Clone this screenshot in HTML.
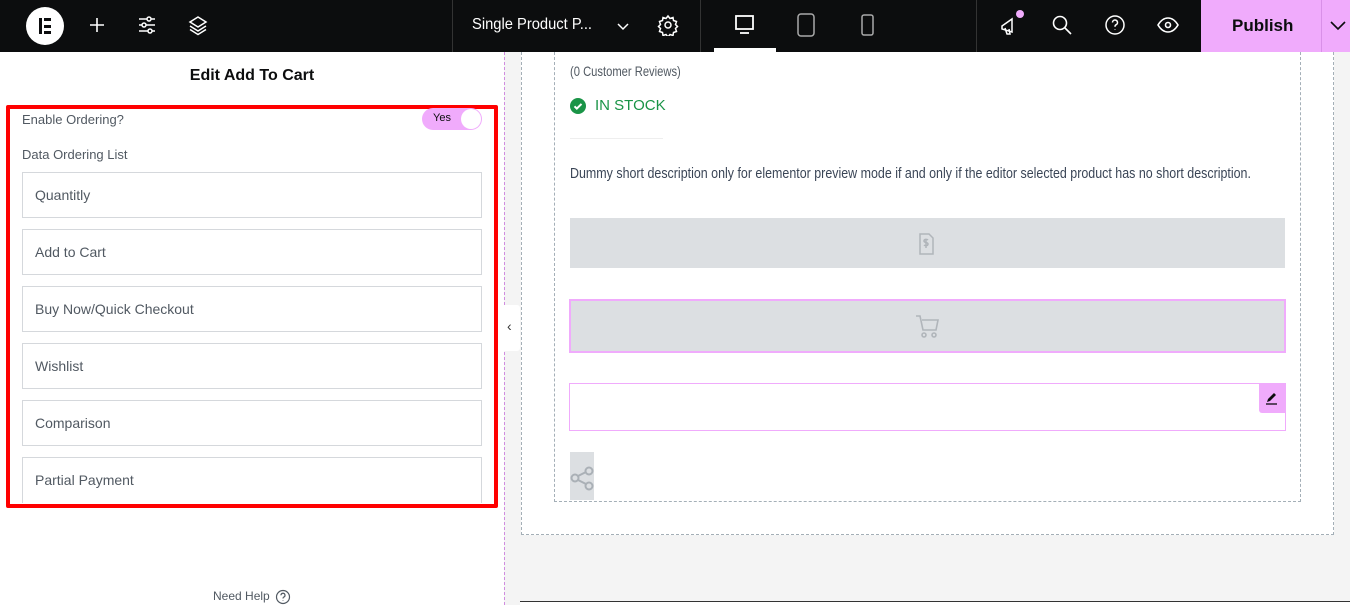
<!DOCTYPE html>
<html><head><meta charset="utf-8"><style>
*{box-sizing:border-box;margin:0;padding:0}
body{width:1350px;height:605px;overflow:hidden;background:#f4f4f4;font-family:"Liberation Sans",sans-serif;position:relative}
.top{position:absolute;left:0;top:0;width:1350px;height:52px;background:#0c0d0e;color:#fff;z-index:5}
.abs{position:absolute}
.panel{position:absolute;left:0;top:52px;width:504px;height:553px;background:#fff}
.item{position:absolute;left:22px;width:460px;height:46px;border:1px solid #d5d8dc;font-size:14px;color:#515962;padding:14px 0 0 12px}
.cond{white-space:nowrap;transform-origin:0 0}
</style></head><body>
<div class="top">
  <div class="abs" style="left:26px;top:7px;width:38px;height:38px;border-radius:50%;background:#fff"></div>
  <div class="abs" style="left:39px;top:18px;width:3px;height:16px;background:#0c0d0e"></div>
  <div class="abs" style="left:44px;top:18px;width:7px;height:3px;background:#0c0d0e"></div>
  <div class="abs" style="left:44px;top:24.5px;width:7px;height:3px;background:#0c0d0e"></div>
  <div class="abs" style="left:44px;top:31px;width:7px;height:3px;background:#0c0d0e"></div>
  <svg class="abs" style="left:86px;top:14px" width="22" height="22" stroke="#fff" stroke-width="1.6" fill="none"><path d="M11 4v14M4 11h14"/></svg>
  <svg class="abs" style="left:136px;top:14px" width="22" height="22" stroke="#fff" stroke-width="1.5" fill="none"><path d="M3 5h16M3 11h16M3 17h16"/><circle cx="13" cy="5" r="2" fill="#0c0d0e"/><circle cx="8" cy="11" r="2" fill="#0c0d0e"/><circle cx="14" cy="17" r="2" fill="#0c0d0e"/></svg>
  <svg class="abs" style="left:187px;top:14px" width="22" height="22" stroke="#fff" stroke-width="1.5" fill="none"><path d="M11 3l8 5-8 5-8-5z M3 12l8 5 8-5 M3 15.5l8 5 8-5"/></svg>
  <div class="abs" style="left:452px;top:0;width:1px;height:52px;background:#333"></div>
  <div class="abs cond" style="left:472px;top:16px;font-size:16px;color:#fff;transform:scaleX(0.92)">Single Product P...</div>
  <svg class="abs" style="left:615px;top:18px" width="16" height="16" stroke="#fff" stroke-width="1.5" fill="none"><path d="M3 6l5 5 5-5"/></svg>
  <svg class="abs" style="left:657px;top:14px" width="22" height="22" stroke="#fff" stroke-width="1.5" fill="none"><circle cx="11" cy="11" r="3"/><path d="M11 2l2 2.5 3-1 .5 3 3 1-1 3 2 2-2 2 1 3-3 1-.5 3-3-1-2 2.5-2-2.5-3 1-.5-3-3-1 1-3-2-2 2-2-1-3 3-1 .5-3 3 1z"/></svg>
  <div class="abs" style="left:700px;top:0;width:1px;height:52px;background:#333"></div>
  <svg class="abs" style="left:733px;top:14px" width="24" height="22" stroke="#fff" stroke-width="1.8" fill="none"><rect x="3" y="2" width="17" height="13"/><path d="M7 19h9"/></svg>
  <div class="abs" style="left:714px;top:48px;width:62px;height:4px;background:#fff"></div>
  <svg class="abs" style="left:796px;top:12px" width="20" height="26" stroke="#aaa" stroke-width="1.5" fill="none"><rect x="2" y="2" width="16" height="22" rx="3"/></svg>
  <svg class="abs" style="left:860px;top:12px" width="16" height="26" stroke="#aaa" stroke-width="1.5" fill="none"><rect x="2" y="3" width="11" height="20" rx="2"/></svg>
  <div class="abs" style="left:976px;top:0;width:1px;height:52px;background:#333"></div>
  <svg class="abs" style="left:999px;top:12px" width="28" height="26" stroke="#fff" stroke-width="1.5" fill="none"><path d="M3 14l10-7v13l-10-3z M6 16l2 6h3l-1-5"/></svg>
  <div class="abs" style="left:1016px;top:10px;width:8px;height:8px;border-radius:50%;background:#f0abfc"></div>
  <svg class="abs" style="left:1051px;top:14px" width="22" height="22" stroke="#fff" stroke-width="1.6" fill="none"><circle cx="9" cy="9" r="6.5"/><path d="M14 14l6 6"/></svg>
  <svg class="abs" style="left:1104px;top:14px" width="22" height="22" stroke="#fff" stroke-width="1.5" fill="none"><circle cx="11" cy="11" r="9"/><path d="M8.5 8.5a2.5 2.5 0 1 1 3.5 2.3c-1 .5-1 1-1 2M11 15.5v.5"/></svg>
  <svg class="abs" style="left:1156px;top:14px" width="24" height="22" stroke="#fff" stroke-width="1.6" fill="none"><path d="M2 11c3-5 6-7 10-7s7 2 10 7c-3 5-6 7-10 7s-7-2-10-7z"/><circle cx="12" cy="11" r="2.5"/></svg>
  <div class="abs" style="left:1201px;top:0;width:149px;height:52px;background:#f0abfc"></div>
  <div class="abs" style="left:1232px;top:16px;font-size:17px;font-weight:bold;color:#0c0d0e">Publish</div>
  <div class="abs" style="left:1321px;top:0;width:1px;height:52px;background:#d990e8"></div>
  <svg class="abs" style="left:1328px;top:17px" width="22" height="18" stroke="#0c0d0e" stroke-width="1.6" fill="none"><path d="M3 5l7 7 7-7"/></svg>
</div>

<div class="panel">
  <div class="abs" style="left:0;top:15px;width:504px;text-align:center;font-size:16px;font-weight:bold;color:#0c0d0e">Edit Add To Cart</div>
  <div class="abs" style="left:6px;top:53px;width:492px;height:403px;border:4px solid #ff0000;border-radius:2px"></div>
  <div class="abs" style="left:22px;top:60px;font-size:13px;color:#515962">Enable Ordering?</div>
  <div class="abs" style="left:422px;top:56px;width:60px;height:22px;border-radius:11px;background:#f0abfc;font-size:11px;color:#0c0d0e;padding:4px 0 0 11px">Yes</div>
  <div class="abs" style="left:461px;top:57px;width:20px;height:20px;border-radius:50%;background:#fff"></div>
  <div class="abs" style="left:22px;top:95px;font-size:13px;color:#515962">Data Ordering List</div>
  <div class="item" style="top:120px">Quantitly</div>
  <div class="item" style="top:177px">Add to Cart</div>
  <div class="item" style="top:234px">Buy Now/Quick Checkout</div>
  <div class="item" style="top:291px">Wishlist</div>
  <div class="item" style="top:348px">Comparison</div>
  <div class="item" style="top:405px;height:46px;border-bottom:none">Partial Payment</div>
  <div class="abs" style="left:213px;top:537px;font-size:12px;color:#515962">Need Help</div>
  <svg class="abs" style="left:275px;top:537px" width="16" height="16" stroke="#515962" stroke-width="1.2" fill="none"><circle cx="8" cy="8" r="6.5"/><path d="M6 6.3a2 2 0 1 1 2.7 1.8c-.6.3-.7.7-.7 1.4M8 11.3v.4"/></svg>
</div>
<div class="abs" style="left:504px;top:52px;width:1px;height:553px;border-left:1px dashed #d08ce0"></div>
<div class="abs" style="left:504px;top:305px;width:16px;height:46px;background:#fff;border-radius:0 3px 3px 0;font-size:14px;color:#333;padding:13px 0 0 3px">‹</div>

<div class="abs" style="left:521px;top:52px;width:813px;height:483px;background:#fff;border:1px dashed #a4afb7;border-top:none"></div>
<div class="abs" style="left:554px;top:52px;width:747px;height:450px;border:1px dashed #a4afb7;border-top:none"></div>
<div class="abs cond" style="left:570px;top:63px;font-size:14px;color:#515962;transform:scaleX(0.8)">(0 Customer Reviews)</div>
<svg class="abs" style="left:570px;top:98px" width="16" height="16"><circle cx="8" cy="8" r="8" fill="#1a9447"/><path d="M4.5 8.3l2.3 2.3 4.7-4.7" stroke="#fff" stroke-width="2" fill="none"/></svg>
<div class="abs" style="left:595px;top:97px;font-size:15px;color:#1a9447">IN STOCK</div>
<div class="abs" style="left:570px;top:138px;width:93px;height:1px;background:#eee"></div>
<div class="abs cond" style="left:570px;top:165px;font-size:15px;color:#3a4556;transform:scaleX(0.83)">Dummy short description only for elementor preview mode if and only if the editor selected product has no short description.</div>
<div class="abs" style="left:570px;top:218px;width:715px;height:50px;background:#dcdfe2"></div>
<svg class="abs" style="left:916px;top:231px" width="24" height="26" stroke="#b0b5ba" stroke-width="1.5" fill="none"><path d="M4 3h9l4 4v16H4z"/><path d="M12 9c-1-1-4-1-4 1s4 1 4 3-3 2-4 1M10 8v9"/></svg>
<div class="abs" style="left:569px;top:299px;width:717px;height:54px;background:#dcdfe2;border:2px solid #f0abfc"></div>
<svg class="abs" style="left:914px;top:313px" width="28" height="28" stroke="#b0b5ba" stroke-width="1.6" fill="none"><path d="M2 3h4l3 14h13l2-10H8"/><circle cx="10" cy="22" r="2"/><circle cx="20" cy="22" r="2"/></svg>
<div class="abs" style="left:569px;top:383px;width:717px;height:48px;border:1px solid #f0abfc;background:#fff"></div>
<div class="abs" style="left:1259px;top:383px;width:27px;height:30px;background:#f0abfc;border-radius:0 0 0 3px"></div>
<svg class="abs" style="left:1264px;top:390px" width="16" height="16"><path d="M3 12l1-3 6-6 2 2-6 6z" fill="#0c0d0e"/><path d="M2 14h11" stroke="#0c0d0e" stroke-width="1.3"/></svg>
<div class="abs" style="left:570px;top:452px;width:24px;height:48px;background:#dcdfe2"></div>
<svg class="abs" style="left:570px;top:465px" width="24" height="26" stroke="#aab0b6" stroke-width="2" fill="none"><circle cx="19" cy="6" r="3.5"/><circle cx="5" cy="13" r="3.5"/><circle cx="19" cy="21" r="3.5"/><path d="M8 11l8-4M8 15l8 4"/></svg>
<div class="abs" style="left:520px;top:601px;width:830px;height:4px;background:#fff;border-top:1px solid #333"></div>
</body></html>
